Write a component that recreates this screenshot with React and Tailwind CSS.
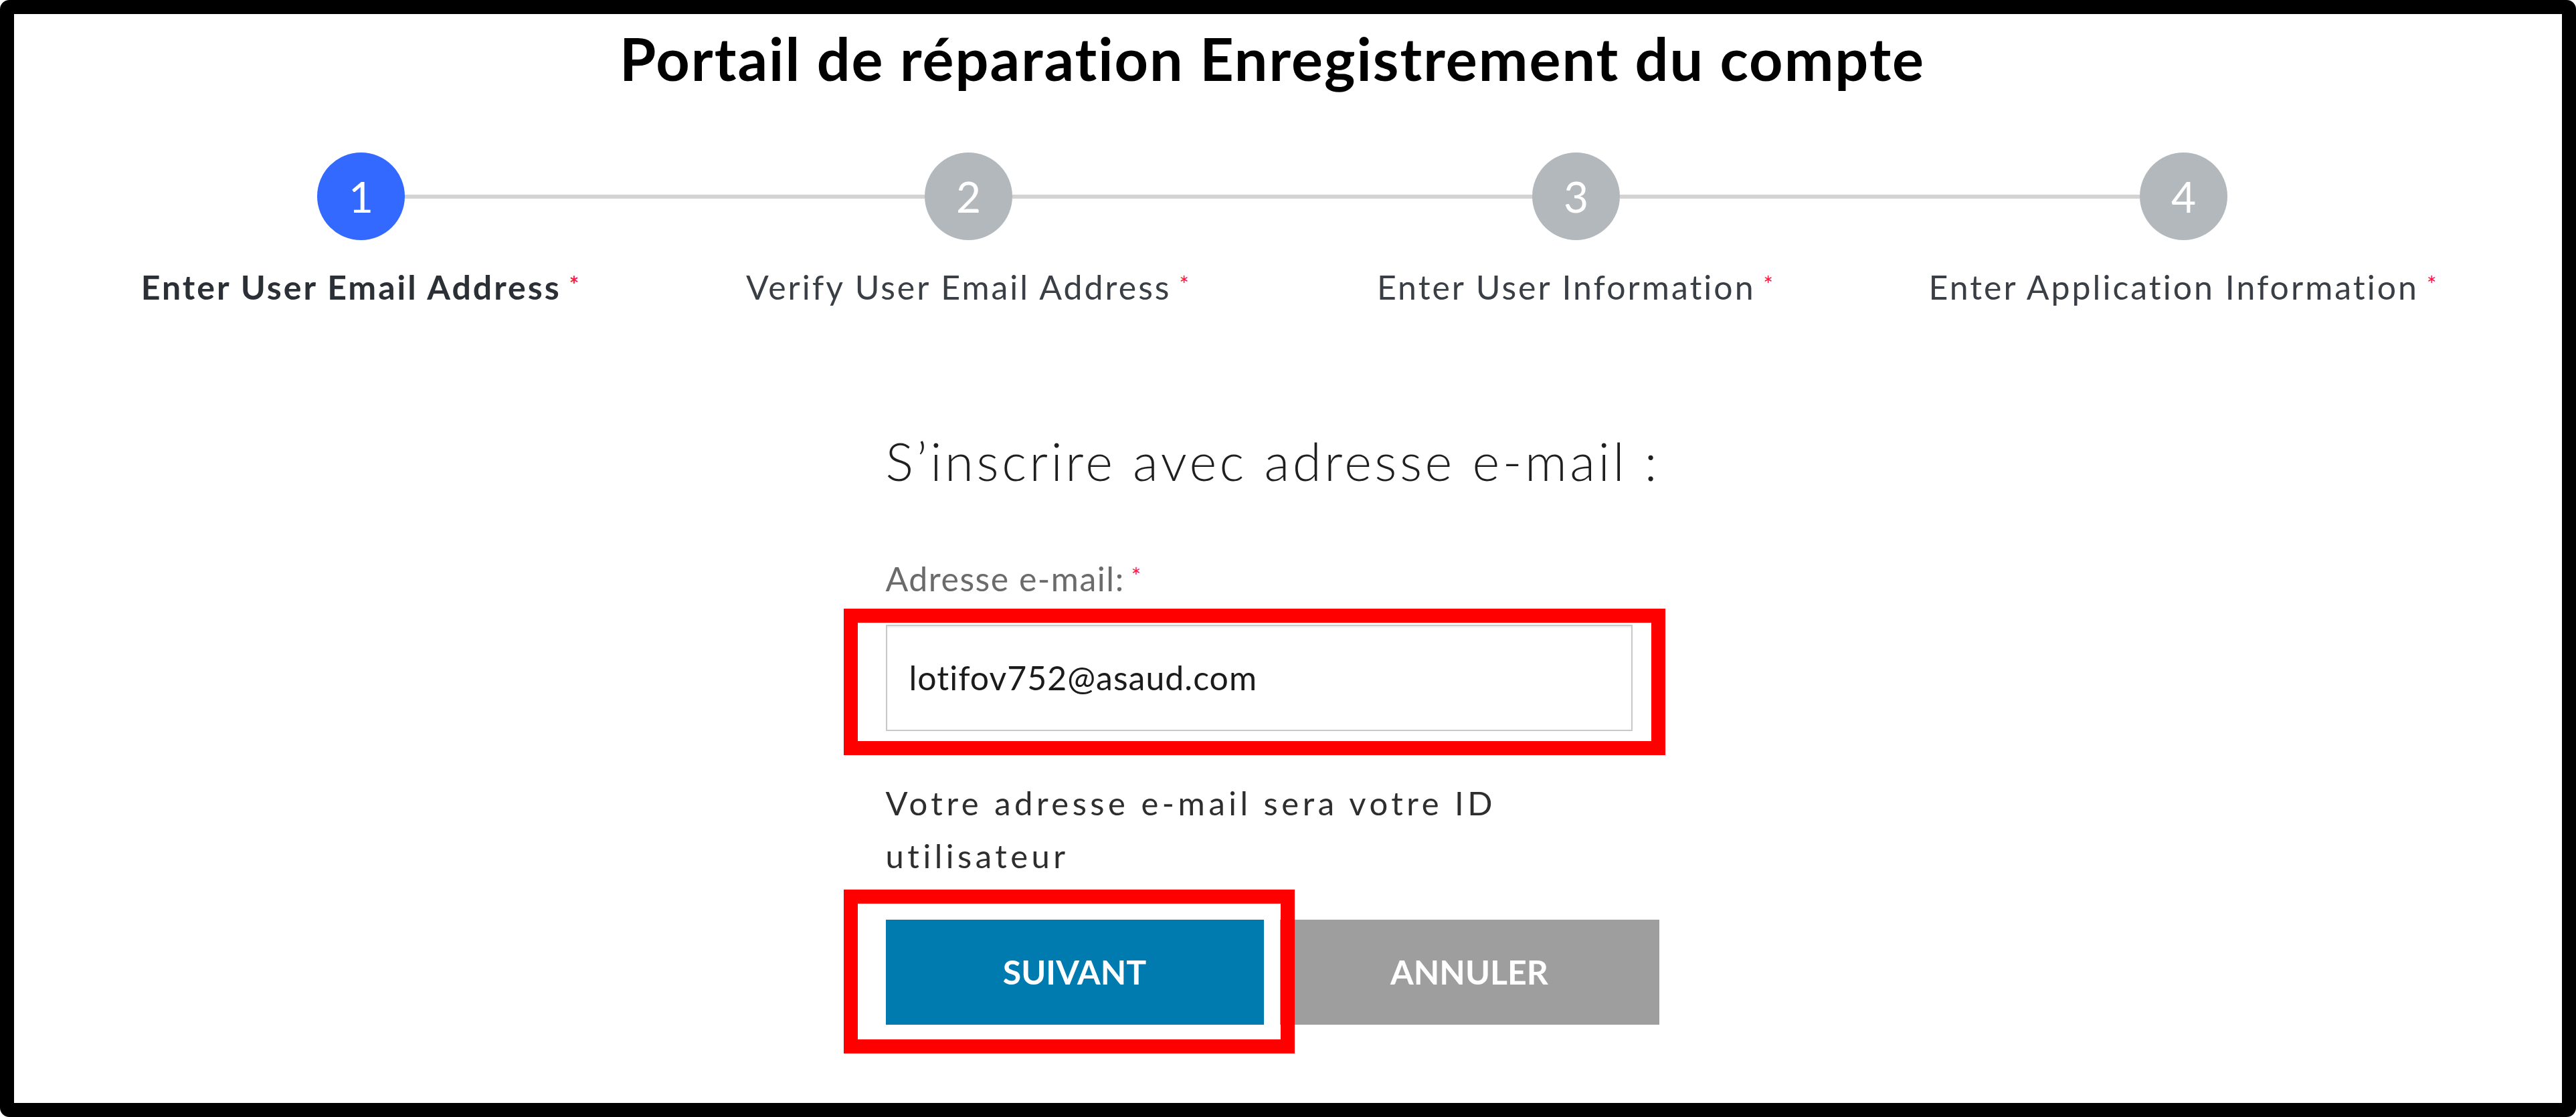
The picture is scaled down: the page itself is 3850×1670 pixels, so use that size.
import React from 'react'

// Stepper + e-mail sign-up form, annotated with red highlight boxes

const STEPS = [
  { n: 1, label: 'Enter User Email Address', active: true },
  { n: 2, label: 'Verify User Email Address' },
  { n: 3, label: 'Enter User Information' },
  { n: 4, label: 'Enter Application Information' },
]

function Step({ step, first, last }) {
  return (
    <div className="flex flex-col items-center">
      <div className="flex items-center w-full">
        <div className={'flex-1 h-[6px] ' + (first ? 'bg-transparent' : 'bg-[#d3d3d3]')} />
        <div
          className={
            'w-[131px] h-[131px] rounded-full flex items-center justify-center text-white text-[64px] leading-none ' +
            (step.active ? 'bg-[#3369ff]' : 'bg-[#b3b8bc]')
          }
        >
          {step.n}
        </div>
        <div className={'flex-1 h-[6px] ' + (last ? 'bg-transparent' : 'bg-[#d3d3d3]')} />
      </div>
      <div
        className={
          'mt-[45px] text-[50px] leading-none whitespace-nowrap tracking-[3px] ' +
          (step.active ? 'font-bold text-[#2b3036]' : 'text-[#3a3f45]')
        }
      >
        {step.label}
        <span className="ml-[12px] text-[34px] align-[0.3em] text-[#ff1744]">*</span>
      </div>
    </div>
  )
}

export default function App() {
  return (
    <div className="w-[3850px] h-[1670px] bg-white" style={{ fontFamily: 'Lato, "Open Sans", sans-serif' }}>
      <div className="w-full h-full border-[21px] border-black rounded-[14px] bg-white overflow-hidden">
        <div className="pr-[47px] pt-[22px]">
          <h1 className="text-center text-[88px] leading-none font-bold text-black tracking-[2px]">
            Portail de réparation Enregistrement du compte
          </h1>

          <div className="mt-[97px] w-[3632px] mx-auto grid grid-cols-4">
            {STEPS.map((s, i) => (
              <Step key={s.n} step={s} first={i === 0} last={i === STEPS.length - 1} />
            ))}
          </div>

          <div className="w-[1156px] mx-auto mt-[196px]">
            <h2 className="text-[78px] leading-none font-light text-[#1f1f1f] tracking-[4.5px] whitespace-nowrap">
              S’inscrire avec adresse e-mail :
            </h2>

            <label className="block mt-[112px] text-[50px] leading-none text-[#6b6b6b] tracking-[1.5px]">
              Adresse e-mail:
              <span className="ml-[10px] text-[34px] align-[0.3em] text-[#ff1744]">*</span>
            </label>

            <div className="relative mt-[44px] w-[1116px]">
              <div className="h-[159px] border-2 border-[#c9c9c9] shadow-[inset_0_2px_2px_rgba(0,0,0,0.08)] flex items-center pl-[33px] text-[50px] text-[#1b1b1b] tracking-[1px]">
                lotifov752@asaud.com
              </div>
              <div className="absolute -left-[63px] -top-[24px] -right-[49px] -bottom-[36px] border-[21px] border-[#ff0000] pointer-events-none" />
            </div>

            <p className="mt-[68px] w-[1116px] text-[49px] leading-[79px] text-[#2e2e2e] tracking-[5.5px]">
              Votre adresse e-mail sera votre ID utilisateur
            </p>

            <div className="mt-[56px] flex gap-[24px]">
              <div className="relative">
                <button className="w-[565px] h-[157px] bg-[#007bb0] text-white text-[50px] font-bold uppercase">
                  Suivant
                </button>
                <div className="absolute -left-[63px] -top-[45px] -right-[46px] -bottom-[43px] border-[21px] border-[#ff0000] pointer-events-none" />
              </div>
              <button className="w-[567px] h-[157px] bg-[#9e9e9e] text-white text-[50px] font-bold uppercase">
                Annuler
              </button>
            </div>
          </div>
        </div>
      </div>
    </div>
  )
}
